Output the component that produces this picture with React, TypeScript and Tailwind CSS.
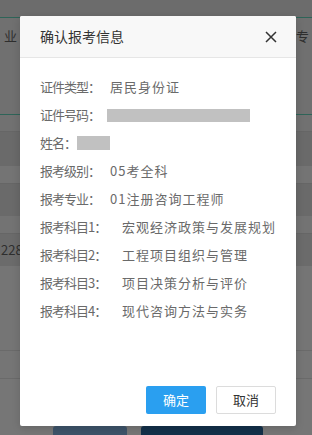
import React from 'react'

const font = { fontFamily: '"Microsoft YaHei", "Noto Sans CJK SC", "Noto Sans", sans-serif' }

// ─── Dimmed page behind the dialog ─────────────────────────────────
function BackPage() {
  return (
    <div className="w-[312px] h-[435px] overflow-hidden bg-[#727272] flex flex-col text-[#2e2e2e] text-[13px]">
      <div className="h-[17px] bg-[#6c6c6c]" />
      <div className="h-px bg-[#2e6458]" />
      <div className="h-[96px] bg-[#707070] flex justify-between pt-[8px]">
        <span className="ml-[4px]">业</span>
        <span className="mr-[3px]">专</span>
      </div>
      <div className="h-px bg-[#2e6458]" />
      <div className="h-[16px] bg-[#717171]" />
      <div className="h-[35px] bg-[#6a6a6a] border-t border-[#666]" />
      <div className="h-[17px] bg-[#747474]" />
      <div className="h-[33px] bg-[#6a6a6a] border-t border-[#666]" />
      <div className="h-[17px] bg-[#737373]" />
      <div className="h-[33px] bg-[#6b6b6b] border-t border-[#666] flex items-center">
        <span className="ml-[1px]">228</span>
      </div>
      <div className="h-[85px] bg-[#757575] border-b border-[#6a6a6a]" />
      <div className="h-[28px] bg-[#757575] border-b border-[#6a6a6a]" />
      <div className="flex-1 bg-[#767676] flex items-end gap-[14px] pl-[53px]">
        <div className="w-[74px] h-[9px] rounded-t-[3px] bg-[#3d5369]" />
        <div className="w-[122px] h-[9px] rounded-t-[3px] bg-[#133049]" />
      </div>
    </div>
  )
}

type Row = { label: string; value?: string; labelW: string; mask?: string }

const rows: Row[] = [
  { label: '证件类型：', value: '居民身份证', labelW: 'w-[70px]' },
  { label: '证件号码：', labelW: 'w-[67px]', mask: 'w-[143px] h-[13px]' },
  { label: '姓名：', labelW: 'w-[37px]', mask: 'w-[33px] h-[14px]' },
  { label: '报考级别：', value: '05考全科', labelW: 'w-[70px]' },
  { label: '报考专业：', value: '01注册咨询工程师', labelW: 'w-[70px]' },
  { label: '报考科目1：', value: '宏观经济政策与发展规划', labelW: 'w-[82px]' },
  { label: '报考科目2：', value: '工程项目组织与管理', labelW: 'w-[82px]' },
  { label: '报考科目3：', value: '项目决策分析与评价', labelW: 'w-[82px]' },
  { label: '报考科目4：', value: '现代咨询方法与实务', labelW: 'w-[82px]' },
]

// ─── Confirm dialog ────────────────────────────────────────────────
function ConfirmDialog() {
  return (
    <div className="absolute left-[20px] top-[16px] w-[276px] h-[410px] bg-white rounded-[2px] flex flex-col shadow-[0_2px_8px_rgba(0,0,0,0.15)]">
      {/* Header */}
      <div className="h-[42px] shrink-0 bg-[#f8f8f8] border-b border-[#e6e6e6] rounded-t-[2px] flex items-center justify-between pl-[20px] pr-[19px]">
        <span className="text-[14px] text-[#333]">确认报考信息</span>
        <svg width="12" height="12" viewBox="0 0 12 12" className="text-[#333]">
          <path d="M1 1 L11 11 M11 1 L1 11" stroke="currentColor" strokeWidth="1.5" fill="none" />
        </svg>
      </div>

      {/* Body */}
      <div className="flex-1 pt-[15px] pl-[20px]">
        {rows.map((r) => (
          <div key={r.label} className="h-[28px] flex items-center text-[#6a6a6a]">
            <span className={`${r.labelW} shrink-0 text-[13px] tracking-[-1px] whitespace-nowrap`}>{r.label}</span>
            {r.value && <span className="text-[13px] tracking-[1px] whitespace-nowrap">{r.value}</span>}
            {r.mask && <span className={`${r.mask} bg-[#c1c1c1]`} />}
          </div>
        ))}
      </div>

      {/* Footer */}
      <div className="shrink-0 flex justify-end gap-[10px] pr-[20px] pb-[12px]">
        <button className="w-[60px] h-[28px] rounded-[2px] bg-[#2a9ff0] text-white text-[13px]">确定</button>
        <button className="w-[60px] h-[28px] rounded-[2px] bg-white border border-[#dcdcdc] text-[#333] text-[13px]">取消</button>
      </div>
    </div>
  )
}

export default function App() {
  return (
    <div className="relative w-[312px] h-[435px]" style={font}>
      <BackPage />
      <ConfirmDialog />
    </div>
  )
}
